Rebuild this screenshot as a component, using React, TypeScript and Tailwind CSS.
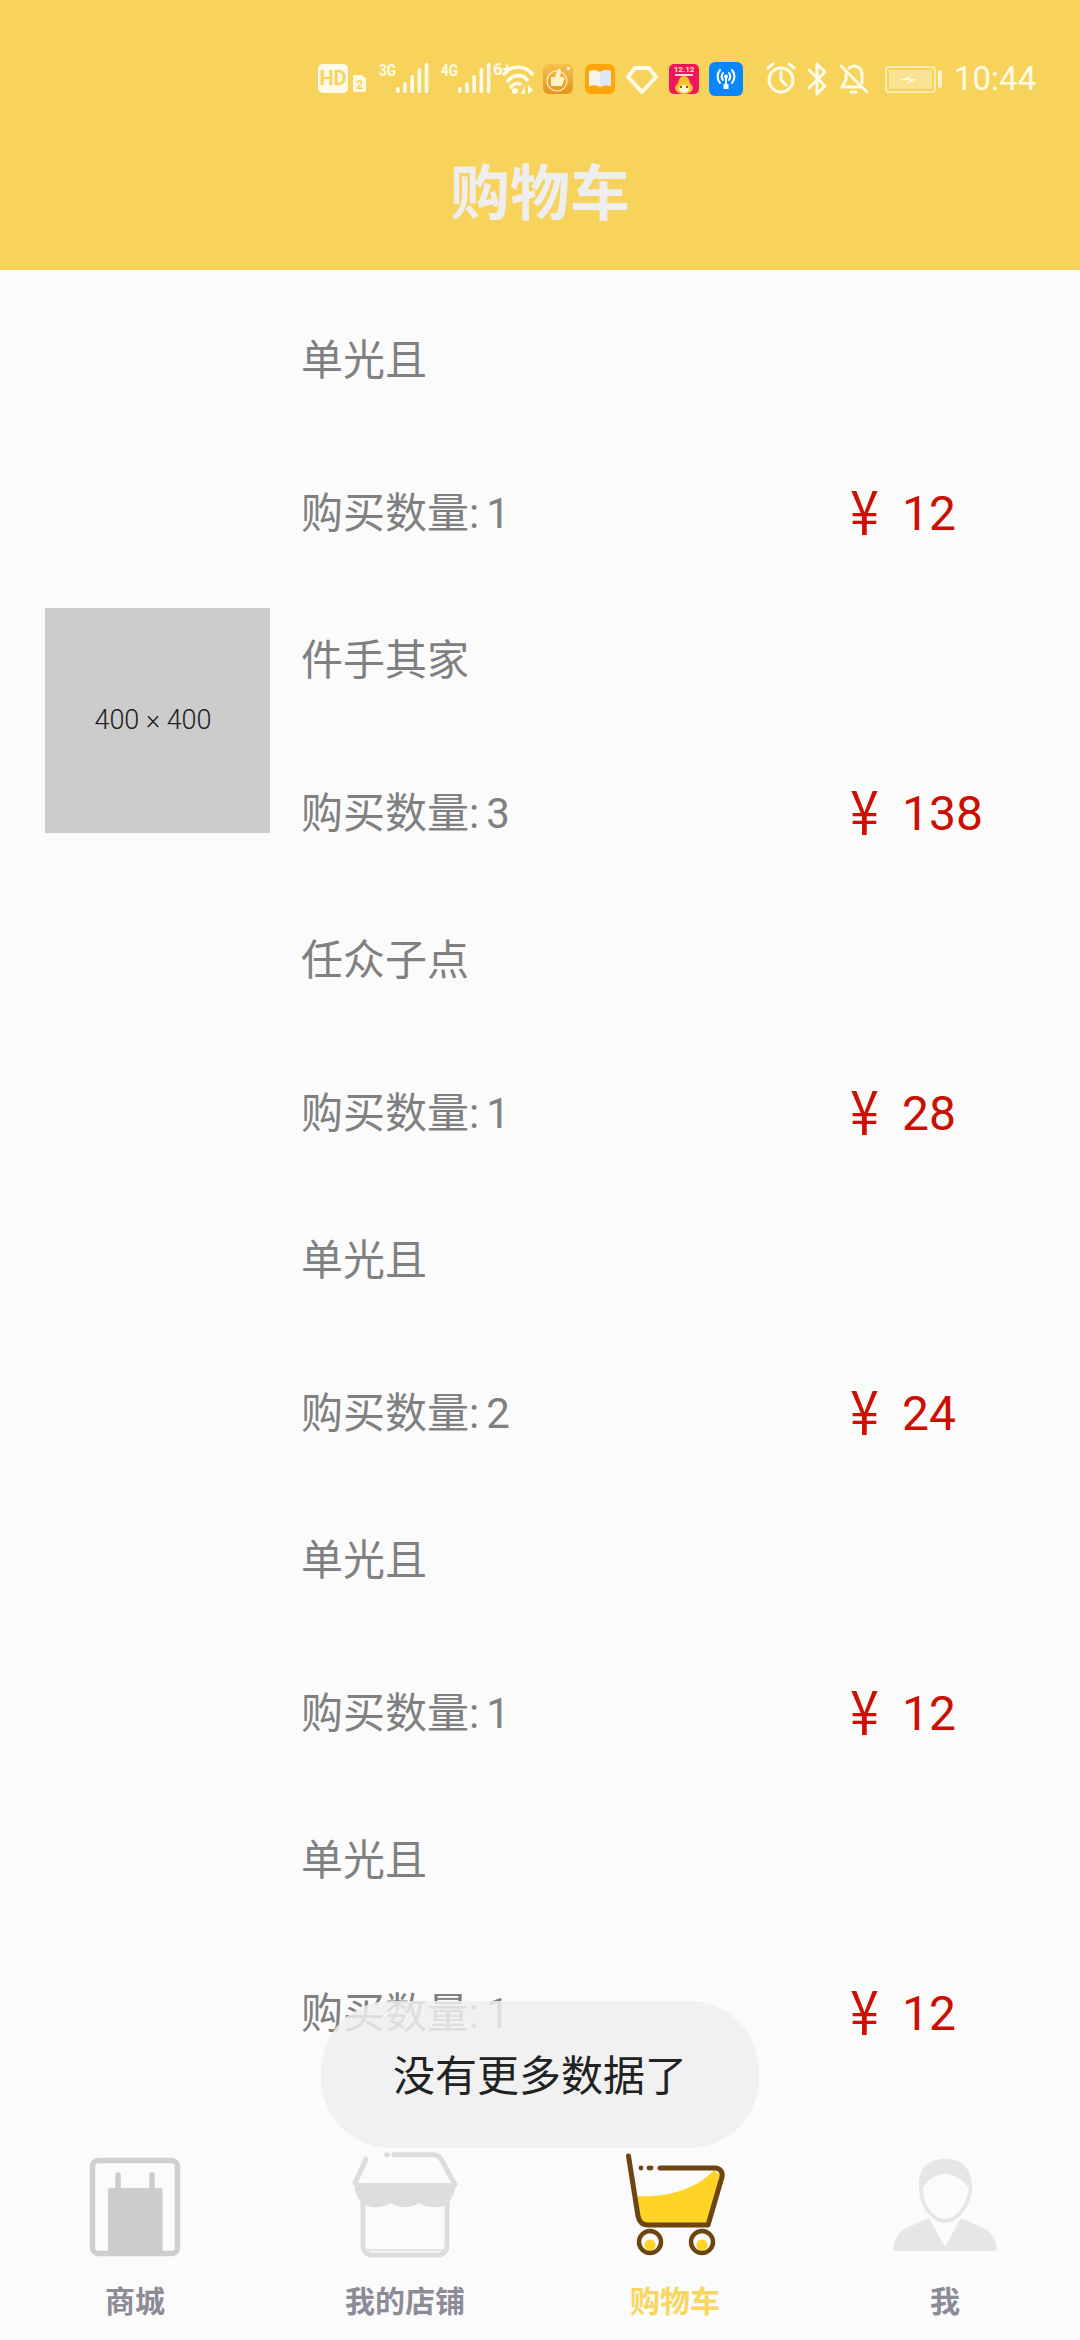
import React from "react";

const items = [
  { title: "单光且", qty: 1, price: 12 },
  { title: "件手其家", qty: 3, price: 138, image: true },
  { title: "任众子点", qty: 1, price: 28 },
  { title: "单光且", qty: 2, price: 24 },
  { title: "单光且", qty: 1, price: 12 },
  { title: "单光且", qty: 1, price: 12 },
];

const W = "#fffbe8";

function Bars() {
  const xs = [0, 7.2, 14.4, 21.6, 28.8];
  const hs = [6, 11, 18, 25, 30];
  return (
    <>
      {xs.map((x, i) => (
        <rect key={i} x={18 + x} y={33 - hs[i]} width="3.6" height={hs[i]} rx="1.6" fill={W} />
      ))}
    </>
  );
}

function Cell({ w, children }: { w: number; children: React.ReactNode }) {
  return (
    <svg width={w} height={36} viewBox={`0 0 ${w} 36`} className="shrink-0 block">
      {children}
    </svg>
  );
}

function SmallLabel({ x, y, t }: { x: number; y: number; t: string }) {
  return (
    <text x={x} y={y} fill={W} fontSize="17" fontWeight="700" fontFamily="Roboto, sans-serif" textLength="17" lengthAdjust="spacingAndGlyphs">
      {t}
    </text>
  );
}

function StatusBar() {
  return (
    <div className="flex items-center h-[36px] mt-[60px] pl-[318px]">
      <Cell w={50}>
        <rect x="0" y="4" width="30" height="29" rx="5" fill={W} />
        <text x="15" y="25" textAnchor="middle" fill="#f7d35b" fontSize="20" fontWeight="700" fontFamily="Roboto, sans-serif">HD</text>
        <path d="M35 15h9l4 4v11a2 2 0 0 1-2 2H37a2 2 0 0 1-2-2z" fill={W} />
        <text x="41.5" y="29" textAnchor="middle" fill="#f7d35b" fontSize="13" fontWeight="700" fontFamily="Roboto, sans-serif">2</text>
      </Cell>
      <div className="ml-[10px]">
        <Cell w={54}>
          <SmallLabel x={1} y={16} t="3G" />
          <Bars />
        </Cell>
      </div>
      <div className="ml-[8px] -mr-[2px]">
        <Cell w={54}>
          <SmallLabel x={1} y={16} t="4G" />
          <Bars />
        </Cell>
      </div>
      <Cell w={46}>
        <text x="1" y="15" fill={W} fontSize="17" fontWeight="700" fontFamily="Roboto, sans-serif">6+</text>
        <g fill="none" stroke={W} strokeWidth="3.6" strokeLinecap="round">
          <path d="M12 14 C 18 5, 34 5, 40 14" />
          <path d="M16 21 C 21 14, 31 14, 35 20" />
          <path d="M19 27 C 21 24, 25 23, 28 24" />
        </g>
        <circle cx="23" cy="31" r="3" fill={W} />
        <path d="M33 25v9h-4zM36 25v9l5-4z" fill={W} />
      </Cell>
      <div className="ml-[5px]">
        <svg width="30" height="36" viewBox="0 0 30 36" className="block">
          <defs>
            <linearGradient id="th" x1="0" y1="0" x2="0" y2="1">
              <stop offset="0" stopColor="#f6c04e" />
              <stop offset="1" stopColor="#e3951f" />
            </linearGradient>
          </defs>
          <rect x="0" y="4" width="30" height="30" rx="6" fill="url(#th)" />
          <circle cx="14" cy="21" r="10" fill="none" stroke="#ffeec0" strokeWidth="1.2" />
          <path d="M8 17h4l3-8c2-1 3 1 3 3l-1 5h3c2 0 2 2 1 3l-2 6H8z" fill="#fff2c8" />
          <rect x="24" y="7" width="3" height="3" fill="#fff2c8" />
        </svg>
      </div>
      <div className="ml-[12px]">
        <svg width="30" height="36" viewBox="0 0 30 36" className="block">
          <rect x="0" y="4" width="30" height="30" rx="6" fill="#ffa608" />
          <path d="M4 11c4-1 8-1 11 1c3-2 7-2 11-1v15c-4-1-8-1-11 1c-3-2-7-2-11-1z" fill="#f4f4ee" />
          <path d="M15 12v15c3-2 7-2 11-1V11c-4-1-8-1-11 1z" fill="#dfe7f5" />
        </svg>
      </div>
      <div className="ml-[11px]">
        <svg width="32" height="36" viewBox="0 0 32 36" className="block">
          <path d="M9 8h14l7 9-14 15L2 17z" fill="none" stroke={W} strokeWidth="4" strokeLinejoin="round" />
        </svg>
      </div>
      <div className="ml-[11px]">
        <svg width="30" height="36" viewBox="0 0 30 36" className="block">
          <rect x="0" y="4" width="30" height="30" rx="5" fill="#f0145c" />
          <text x="15" y="12" textAnchor="middle" fill="#ffe9b0" fontSize="8" fontWeight="700" fontFamily="Roboto, sans-serif">12.12</text>
          <rect x="6" y="14" width="18" height="2" fill="#ffd9d9" />
          <path d="M9 24c0-5 3-8 6-8s6 3 6 8z" fill="#f8c020" />
          <ellipse cx="15" cy="28" rx="9" ry="6" fill="#f7c631" />
          <ellipse cx="15" cy="29" rx="5" ry="4" fill="#fff3d0" />
          <circle cx="12" cy="27" r="1" fill="#553300" />
          <circle cx="18" cy="27" r="1" fill="#553300" />
        </svg>
      </div>
      <div className="ml-[10px]">
        <svg width="34" height="36" viewBox="0 0 34 36" className="block">
          <rect x="0" y="2" width="34" height="34" rx="6" fill="#0a86ff" />
          <g fill="none" stroke="#fff" strokeWidth="2" strokeLinecap="round">
            <path d="M11 10a10 10 0 0 0 0 13" />
            <path d="M23 10a10 10 0 0 1 0 13" />
            <path d="M14 13a6 6 0 0 0 0 7" />
            <path d="M20 13a6 6 0 0 1 0 7" />
          </g>
          <circle cx="17" cy="16.5" r="2" fill="#fff" />
          <rect x="16" y="17" width="2" height="9" fill="#fff" />
          <rect x="14.5" y="24" width="5" height="5" fill="#fff" />
        </svg>
      </div>
      <div className="ml-[23px]">
        <svg width="30" height="36" viewBox="0 0 30 36" className="block">
          <g fill="none" stroke={W} strokeWidth="3" strokeLinecap="round" strokeLinejoin="round">
            <circle cx="15" cy="20" r="12" />
            <path d="M15 12v8l5 5" />
            <path d="M2 8l5-4" />
            <path d="M28 8l-5-4" />
          </g>
        </svg>
      </div>
      <div className="ml-[11px]">
        <svg width="20" height="36" viewBox="0 0 20 36" className="block">
          <path d="M2 10l16 16-8 8V4l8 8L2 28" fill="none" stroke={W} strokeWidth="3" strokeLinecap="round" strokeLinejoin="round" />
        </svg>
      </div>
      <div className="ml-[13px]">
        <svg width="28" height="36" viewBox="0 0 28 36" className="block">
          <g fill="none" stroke={W} strokeWidth="3" strokeLinecap="round" strokeLinejoin="round">
            <path d="M9 8c4-4 13-2 13 7v8" />
            <path d="M6 14v6l-4 7h19" />
            <path d="M1 6l26 26" />
            <path d="M11 32h5" />
          </g>
        </svg>
      </div>
      <div className="ml-[17px]">
        <svg width="58" height="36" viewBox="0 0 58 36" className="block">
          <rect x="1" y="7" width="49" height="25" rx="3" fill="none" stroke={W} strokeOpacity="0.6" strokeWidth="2" />
          <rect x="4" y="10" width="43" height="19" fill={W} fillOpacity="0.4" />
          <path d="M15 20l11-4-3 3h9l-10 5 3-4z" fill={W} />
          <rect x="53" y="10" width="4" height="18" rx="2" fill={W} fillOpacity="0.8" />
        </svg>
      </div>
      <span className="ml-[11px] text-[33px] leading-[36px] text-[#fffbe8] font-['Roboto',sans-serif] mt-[2px]">10:44</span>
    </div>
  );
}

function ShopIcon() {
  return (
    <svg width="120" height="110" viewBox="0 0 120 110" className="block">
      <rect x="17.5" y="10.5" width="85" height="93" rx="6" fill="none" stroke="#cfcfcf" strokeWidth="5.5" />
      <path d="M33 40a2 2 0 0 1 2-2h50.5a2 2 0 0 1 2 2v65H33z" fill="#cccccc" />
      <path d="M43 25v14M77 25v14" stroke="#cccccc" strokeWidth="5.5" strokeLinecap="round" />
    </svg>
  );
}

function StoreIcon() {
  return (
    <svg width="120" height="110" viewBox="0 0 120 110" className="block">
      <path d="M18 50v46a9 9 0 0 0 9 9h66a9 9 0 0 0 9-9V50" fill="none" stroke="#dddddd" strokeWidth="5" />
      <path d="M18 100h84" stroke="#dddddd" strokeWidth="1.5" />
      <path d="M10 33h100c1 8-2 14-7 20-4 4-10 5-15 4-4 0-9-1-14-4-4 3-9 4-14 4s-10-1-14-4c-5 3-9 4-14 4-6 1-12-1-16-5-4-5-7-11-6-19z" fill="#dddddd" />
      <path d="M21 9L10 33M49 4.7h39c4 0 7 2 9 6l13 24" fill="none" stroke="#dddddd" strokeWidth="5" strokeLinecap="round" strokeLinejoin="round" />
      <ellipse cx="42" cy="4.7" rx="3" ry="2.5" fill="#dddddd" />
    </svg>
  );
}

function CartIcon() {
  return (
    <svg width="120" height="110" viewBox="0 0 120 110" className="block">
      <path d="M23 46c30 2 60-8 76-26l8 7-14 48H32c-5 0-8-4-9-8z" fill="#ffd426" />
      <path d="M13.5 6L23 66c1 5 4 9 10 9h60l14-48c1-5-2-9-7-9H45" fill="none" stroke="#6d4510" strokeWidth="5" strokeLinecap="round" strokeLinejoin="round" />
      <circle cx="26" cy="18" r="2.4" fill="#6d4510" />
      <ellipse cx="35" cy="18" rx="3.4" ry="2.4" fill="#6d4510" />
      <circle cx="35" cy="95" r="5.6" fill="#ffd426" />
      <circle cx="87" cy="95" r="5.6" fill="#ffd426" />
      <circle cx="35" cy="92" r="11" fill="none" stroke="#6d4510" strokeWidth="4.5" />
      <circle cx="87" cy="92" r="11" fill="none" stroke="#6d4510" strokeWidth="4.5" />
    </svg>
  );
}

function PersonIcon() {
  return (
    <svg width="120" height="110" viewBox="0 0 120 110" className="block">
      <path d="M34 38c-1-20 9-29 26-29s27 9 27 29c0 8-3 16-8 23-5 7-12 12-19 12s-14-5-19-12c-4-7-7-15-7-23z" fill="#e6e6e6" />
      <path d="M38 38c5-9 13-14 22-14s17 5 24 14c-1 8-4 15-8 21-5 6-10 10-16 10s-12-4-16-10c-4-6-6-13-6-21z" fill="#fbfbfb" />
      <path d="M8 98c1-6 5-15 11-19l25-11 16 29 16-29 25 11c6 4 10 13 11 19 0 2-1 3-3 3H11c-2 0-3-1-3-3z" fill="#e6e6e6" />
    </svg>
  );
}

function Tab({ label, active, children }: { label: string; active?: boolean; children: React.ReactNode }) {
  return (
    <div className="flex-1 flex flex-col items-center">
      {children}
      <span className={`mt-[25px] text-[30px] leading-[34px] font-bold ${active ? "text-[#f8d660]" : "text-[#8c8c98]"}`}>
        {label}
      </span>
    </div>
  );
}

export default function App() {
  return (
    <div className="relative w-[1080px] h-[2340px] overflow-hidden flex flex-col bg-[#fbfbfb] font-['Roboto','Noto_Sans_CJK_SC',sans-serif]">
      <header className="h-[270px] shrink-0 bg-[#f7d35b] flex flex-col">
        <StatusBar />
        <h1 className="mt-[63px] text-center text-[60px] leading-[72px] font-bold text-[#eeeeee]">购物车</h1>
      </header>

      <main className="flex-1 overflow-hidden">
        {items.map((it, i) => (
          <div key={i} className="h-[300px] flex items-center pl-[45px]">
            <div className="w-[225px] h-[225px] shrink-0">
              {it.image && (
                <div className="w-full h-full bg-[#cccccc] flex items-center justify-center pr-[9px] text-[27px] font-light text-[#222222]">
                  400 × 400
                </div>
              )}
            </div>
            <div className="flex-1 h-full ml-[31px] pt-[41px] flex flex-col gap-[52px]">
              <div className="h-[100px] leading-[100px] text-[42px] text-[#808080]">{it.title}</div>
              <div className="h-[100px] flex items-center">
                <span className="flex-1 text-[42px] text-[#808080]">
                  购买数量:<span className="ml-[7px]">{it.qty}</span>
                </span>
                <span className="w-[230px] flex items-center text-[#cc0f00]">
                  <span className="w-[44px] text-[52px] leading-[60px] font-['Noto_Sans_CJK_SC',sans-serif] scale-y-[1.18] -translate-y-[4px] mr-[8px]">¥</span>
                  <span className="text-[48px] leading-[60px] mt-[2px]">{it.price}</span>
                </span>
              </div>
            </div>
          </div>
        ))}
      </main>

      <nav className="h-[190px] shrink-0 flex items-start pt-0">
        <Tab label="商城"><ShopIcon /></Tab>
        <Tab label="我的店铺"><StoreIcon /></Tab>
        <Tab label="购物车" active><CartIcon /></Tab>
        <Tab label="我"><PersonIcon /></Tab>
      </nav>

      <div className="absolute left-[321px] top-[2001px] w-[438px] h-[147px] pt-[3px] rounded-[70px] bg-[rgba(238,238,238,0.85)] flex items-center justify-center text-[42px] text-[#222222]">
        没有更多数据了
      </div>
    </div>
  );
}
